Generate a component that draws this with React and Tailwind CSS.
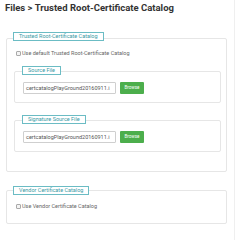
import React from "react";

const Legend = ({ children, className = "" }) => (
  <div
    className={`relative z-10 w-fit border border-[#6bbcc4] bg-white px-[5px] h-[9px] flex items-center text-[5.5px] leading-none text-[#3a9aa5] ${className}`}
  >
    {children}
  </div>
);

const FileField = ({ title, legendWidth, className = "" }) => (
  <div className={`flex flex-col ${className}`}>
    <Legend className={`ml-[8px] -mb-[4px] ${legendWidth}`}>{title}</Legend>
    <div className="h-[32px] rounded-[2px] border border-[#e6e6e6] px-[8px] pt-[10px] flex gap-[4px]">
      <div className="w-[93px] h-[12px] border border-[#cfcfcf] rounded-[1px] flex items-center px-[2px] text-[5.5px] text-[#555] overflow-hidden whitespace-nowrap">
        certcatalogPlayGround20160911.i
      </div>
      <button className="w-[24px] h-[12px] rounded-[1px] bg-[#4cae4c] text-white text-[4.5px] flex items-center justify-center">
        Browse
      </button>
    </div>
  </div>
);

const CheckRow = ({ label }) => (
  <div className="h-[7px] flex items-center gap-[1px] text-[5.5px] leading-[7px] text-[#666]">
    <span className="w-[5px] h-[5px] border border-[#aaa] rounded-[1px] bg-[#f4f4f4]" />
    <span>{label}</span>
  </div>
);

export default function App() {
  return (
    <div
      className="w-[240px] h-[240px] bg-white flex overflow-hidden"
      style={{ fontFamily: "Roboto, 'Liberation Sans', sans-serif" }}
    >
      <div className="w-[235px] border-r border-[#efefef] flex flex-col">
        <h1 className="pl-[5px] pt-[2px] text-[9.5px] font-bold text-[#333] leading-[12px]">
          Files &gt; Trusted Root-Certificate Catalog
        </h1>

        <div className="mt-[18px] ml-[6px] w-[221px] flex flex-col">
          <Legend className="ml-[7px] -mb-[3px] w-[94px]">Trusted Root-Certificate Catalog</Legend>
          <div className="h-[134px] rounded-[2px] border border-[#e6e6e6] pl-[7px] pr-[5px] pt-[11px] flex flex-col">
            <div className="pl-[2px]">
              <CheckRow label="Use default Trusted Root-Certificate Catalog" />
            </div>
            <FileField className="mt-[9px]" title="Source File" legendWidth="w-[41px]" />
            <FileField className="mt-[12px]" title="Signature Source File" legendWidth="w-[67px]" />
          </div>
        </div>

        <div className="mt-[14px] ml-[6px] w-[221px] flex flex-col">
          <Legend className="ml-[7px] -mb-[5px] w-[80px]">Vendor Certificate Catalog</Legend>
          <div className="h-[34px] rounded-[2px] border border-[#e6e6e6] pl-[9px] pt-[12px]">
            <CheckRow label="Use Vendor Certificate Catalog" />
          </div>
        </div>
      </div>
    </div>
  );
}
